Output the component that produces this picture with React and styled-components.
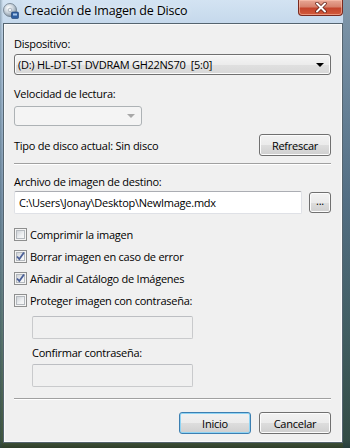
import React from 'react';
import styled, { createGlobalStyle } from 'styled-components';

const GlobalStyle = createGlobalStyle`
  html, body {
    margin: 0;
    padding: 0;
    background: #3d5238;
  }
  body {
    font-family: "Open Sans", "Noto Sans", sans-serif;
    font-size: 11px;
    letter-spacing: -0.25px;
    color: #000;
  }
`;

const Window = styled.div`
  width: 350px;
  height: 448px;
  box-sizing: border-box;
  padding: 0 7px 5px 3px;
  display: flex;
  flex-direction: column;
  background:
    linear-gradient(to right, rgba(40, 70, 90, 0.35) 0, rgba(0, 0, 0, 0) 3px, rgba(0, 0, 0, 0) 343px, rgba(30, 60, 80, 0.45) 343px),
    linear-gradient(to bottom, #d3e3f2 0, #c6d9ec 22px, #a9c0d6 90px, #7f98ae 200px, #5f7a72 330px, #44583c 440px, #2f3f2a 448px);
  overflow: hidden;
`;

const TitleBar = styled.div`
  height: 23px;
  display: flex;
  align-items: flex-start;
`;

const AppIcon = styled.svg`
  width: 16px;
  height: 16px;
  margin-top: 3px;
  flex: none;
`;

const Title = styled.div`
  margin-left: 5px;
  margin-top: 2px;
  font-size: 12.5px;
  letter-spacing: -0.2px;
  line-height: 18px;
  color: #000;
  text-shadow: 0 0 6px rgba(255, 255, 255, 0.9);
`;

const CloseButton = styled.div`
  margin-left: auto;
  width: 45px;
  height: 16px;
  box-sizing: border-box;
  border: 1px solid #7a2a1f;
  border-top: none;
  border-radius: 0 0 4px 4px;
  background: linear-gradient(to bottom, #e8a795 0, #d7826d 45%, #c4452c 55%, #d25a3b 100%);
  box-shadow: inset 0 0 0 1px rgba(255, 200, 180, 0.55);
  display: flex;
  align-items: center;
  justify-content: center;
`;

const Client = styled.div`
  flex: 1;
  background: #f0f0f0;
  border: 1px solid #55646f;
  box-shadow: inset 0 0 0 1px #fafafa;
  padding: 12px 11px 0 10px;
  display: flex;
  flex-direction: column;
`;

const Label = styled.div`
  line-height: 15px;
  height: 15px;
  margin-top: ${(p) => p.$mt || 0}px;
  margin-left: ${(p) => p.$ml || 0}px;
  color: ${(p) => (p.$disabled ? '#6d6d6d' : '#000')};
  white-space: pre;
`;

const Select = styled.div`
  margin-top: ${(p) => p.$mt || 0}px;
  width: ${(p) => p.$w || 'auto'};
  height: ${(p) => p.$h || 21}px;
  box-sizing: border-box;
  border: 1px solid ${(p) => (p.$disabled ? '#adb2b5' : '#707070')};
  border-radius: 3px;
  background: ${(p) =>
    p.$disabled
      ? '#f4f4f4'
      : 'linear-gradient(to bottom, #f6f6f6 0, #ececec 50%, #e0e0e0 51%, #d8d8d8 100%)'};
  box-shadow: inset 0 0 0 1px ${(p) => (p.$disabled ? '#f4f4f4' : '#fbfbfb')};
  display: flex;
  align-items: center;
  padding: 0 6px 0 3px;
`;

const SelectText = styled.span`
  flex: 1;
  white-space: pre;
`;

const Arrow = styled.span`
  width: 0;
  height: 0;
  border-left: 4px solid transparent;
  border-right: 4px solid transparent;
  border-top: 4px solid ${(p) => (p.$disabled ? '#a8a8a8' : '#000')};
`;

const Row = styled.div`
  margin-top: ${(p) => p.$mt || 0}px;
  display: flex;
  align-items: center;
  justify-content: ${(p) => p.$justify || 'flex-start'};
  gap: ${(p) => p.$gap || 0}px;
`;

const Button = styled.div`
  width: ${(p) => p.$w || 72}px;
  height: ${(p) => p.$h || 22}px;
  box-sizing: border-box;
  border: 1px solid ${(p) => (p.$default ? '#3c7fb1' : '#707070')};
  border-radius: 3px;
  background: linear-gradient(to bottom, #f2f2f2 0, #ebebeb 50%, #dddddd 51%, #cfcfcf 100%);
  box-shadow: inset 0 0 0 1px ${(p) => (p.$default ? '#8fd4f4' : '#fcfcfc')};
  display: flex;
  align-items: center;
  justify-content: center;
  flex: none;
  line-height: 1;
  padding-bottom: ${(p) => p.$pb || 0}px;
`;

const Separator = styled.div`
  margin-top: ${(p) => p.$mt || 0}px;
  height: 1px;
  background: #a0a0a0;
  border-bottom: 1px solid #ffffff;
`;

const TextBox = styled.div`
  width: ${(p) => p.$w || 'auto'};
  flex: ${(p) => (p.$grow ? 1 : 'none')};
  height: ${(p) => p.$h || 22}px;
  margin-top: ${(p) => p.$mt || 0}px;
  margin-left: ${(p) => p.$ml || 0}px;
  box-sizing: border-box;
  border: 1px solid ${(p) => (p.$disabled ? '#c9cacc' : '#dfe1e6')};
  border-top-color: ${(p) => (p.$disabled ? '#bcbec2' : '#abadb3')};
  border-radius: 2px;
  background: ${(p) => (p.$disabled ? '#f0f0f0' : '#ffffff')};
  display: flex;
  align-items: center;
  padding-left: 4px;
  white-space: pre;
`;

const CheckList = styled.div`
  margin-top: ${(p) => p.$mt || 0}px;
  display: flex;
  flex-direction: column;
`;

const CheckRow = styled.label`
  height: 22px;
  display: flex;
  align-items: center;
  gap: 3px;
`;

const Box = styled.span`
  width: 13px;
  height: 13px;
  box-sizing: border-box;
  border: 1px solid #8e8f8f;
  background: #f4f4f4;
  padding: 1px;
  display: flex;
  flex: none;
`;

const BoxInner = styled.span`
  flex: 1;
  border: 1px solid #b4b9be;
  background: linear-gradient(135deg, #cfd3d8 0, #eef0f2 60%, #f8f8f8 100%);
  position: relative;
`;

const CheckMark = styled.svg`
  position: absolute;
  left: -2px;
  top: -2px;
  width: 11px;
  height: 11px;
`;

const Check = ({ checked, children }) => (
  <CheckRow>
    <Box>
      <BoxInner>
        {checked && (
          <CheckMark viewBox="0 0 11 11">
            <path d="M2 5.5 L4.3 8 L9 1.5" fill="none" stroke="#4a5f97" strokeWidth="1.8" />
          </CheckMark>
        )}
      </BoxInner>
    </Box>
    <span>{children}</span>
  </CheckRow>
);

const App = () => (
  <>
    <GlobalStyle />
    <Window>
      <TitleBar>
        <AppIcon viewBox="0 0 16 16">
          <defs>
            <radialGradient id="disc" cx="0.4" cy="0.35" r="0.7">
              <stop offset="0" stopColor="#ffffff" />
              <stop offset="0.5" stopColor="#c9d3dc" />
              <stop offset="1" stopColor="#7f8e9c" />
            </radialGradient>
          </defs>
          <circle cx="7" cy="7" r="6.5" fill="url(#disc)" stroke="#6b7a88" strokeWidth="0.8" />
          <circle cx="7" cy="7" r="1.8" fill="#eef2f5" stroke="#8a96a2" strokeWidth="0.6" />
          <rect x="8.5" y="9" width="7" height="6.5" rx="1" fill="#2f5fa0" stroke="#1c3d6e" strokeWidth="0.6" />
          <rect x="10" y="10.5" width="4" height="2" fill="#a9c8ec" />
        </AppIcon>
        <Title>Creación de Imagen de Disco</Title>
        <CloseButton>
          <svg width="12" height="11" viewBox="0 0 12 11">
            <path d="M2 1.5 L10 9.5 M10 1.5 L2 9.5" stroke="#5a1a10" strokeWidth="3.4" strokeLinecap="round" />
            <path d="M2 1.5 L10 9.5 M10 1.5 L2 9.5" stroke="#ffffff" strokeWidth="2" strokeLinecap="round" />
          </svg>
        </CloseButton>
      </TitleBar>
      <Client>
        <Label>Dispositivo:</Label>
        <Select $mt={3}>
          <SelectText>(D:) HL-DT-ST DVDRAM GH22NS70  [5:0]</SelectText>
          <Arrow />
        </Select>
        <Label $mt={11}>Velocidad de lectura:</Label>
        <Select $mt={5} $w="128px" $h={20} $disabled>
          <SelectText />
          <Arrow $disabled />
        </Select>
        <Row $mt={8} $justify="space-between">
          <span>Tipo de disco actual: Sin disco</span>
          <Button>Refrescar</Button>
        </Row>
        <Separator $mt={7} />
        <Label $mt={9}>Archivo de imagen de destino:</Label>
        <Row $mt={2} $gap={7}>
          <TextBox $grow $h={23}>{'C:\\Users\\Jonay\\Desktop\\NewImage.mdx'}</TextBox>
          <Button $w={22} $h={21} $pb={4}>...</Button>
        </Row>
        <CheckList $mt={9}>
          <Check>Comprimir la imagen</Check>
          <Check checked>Borrar imagen en caso de error</Check>
          <Check checked>Añadir al Catálogo de Imágenes</Check>
          <Check>Proteger imagen con contraseña:</Check>
        </CheckList>
        <TextBox $mt={5} $ml={18} $w="161px" $h={23} $disabled />
        <Label $mt={6} $ml={18}>Confirmar contraseña:</Label>
        <TextBox $mt={4} $ml={18} $w="161px" $h={23} $disabled />
        <Separator $mt={11} />
        <Row $mt={12} $justify="flex-end" $gap={8}>
          <Button $default>Inicio</Button>
          <Button>Cancelar</Button>
        </Row>
      </Client>
    </Window>
  </>
);

export default App;
